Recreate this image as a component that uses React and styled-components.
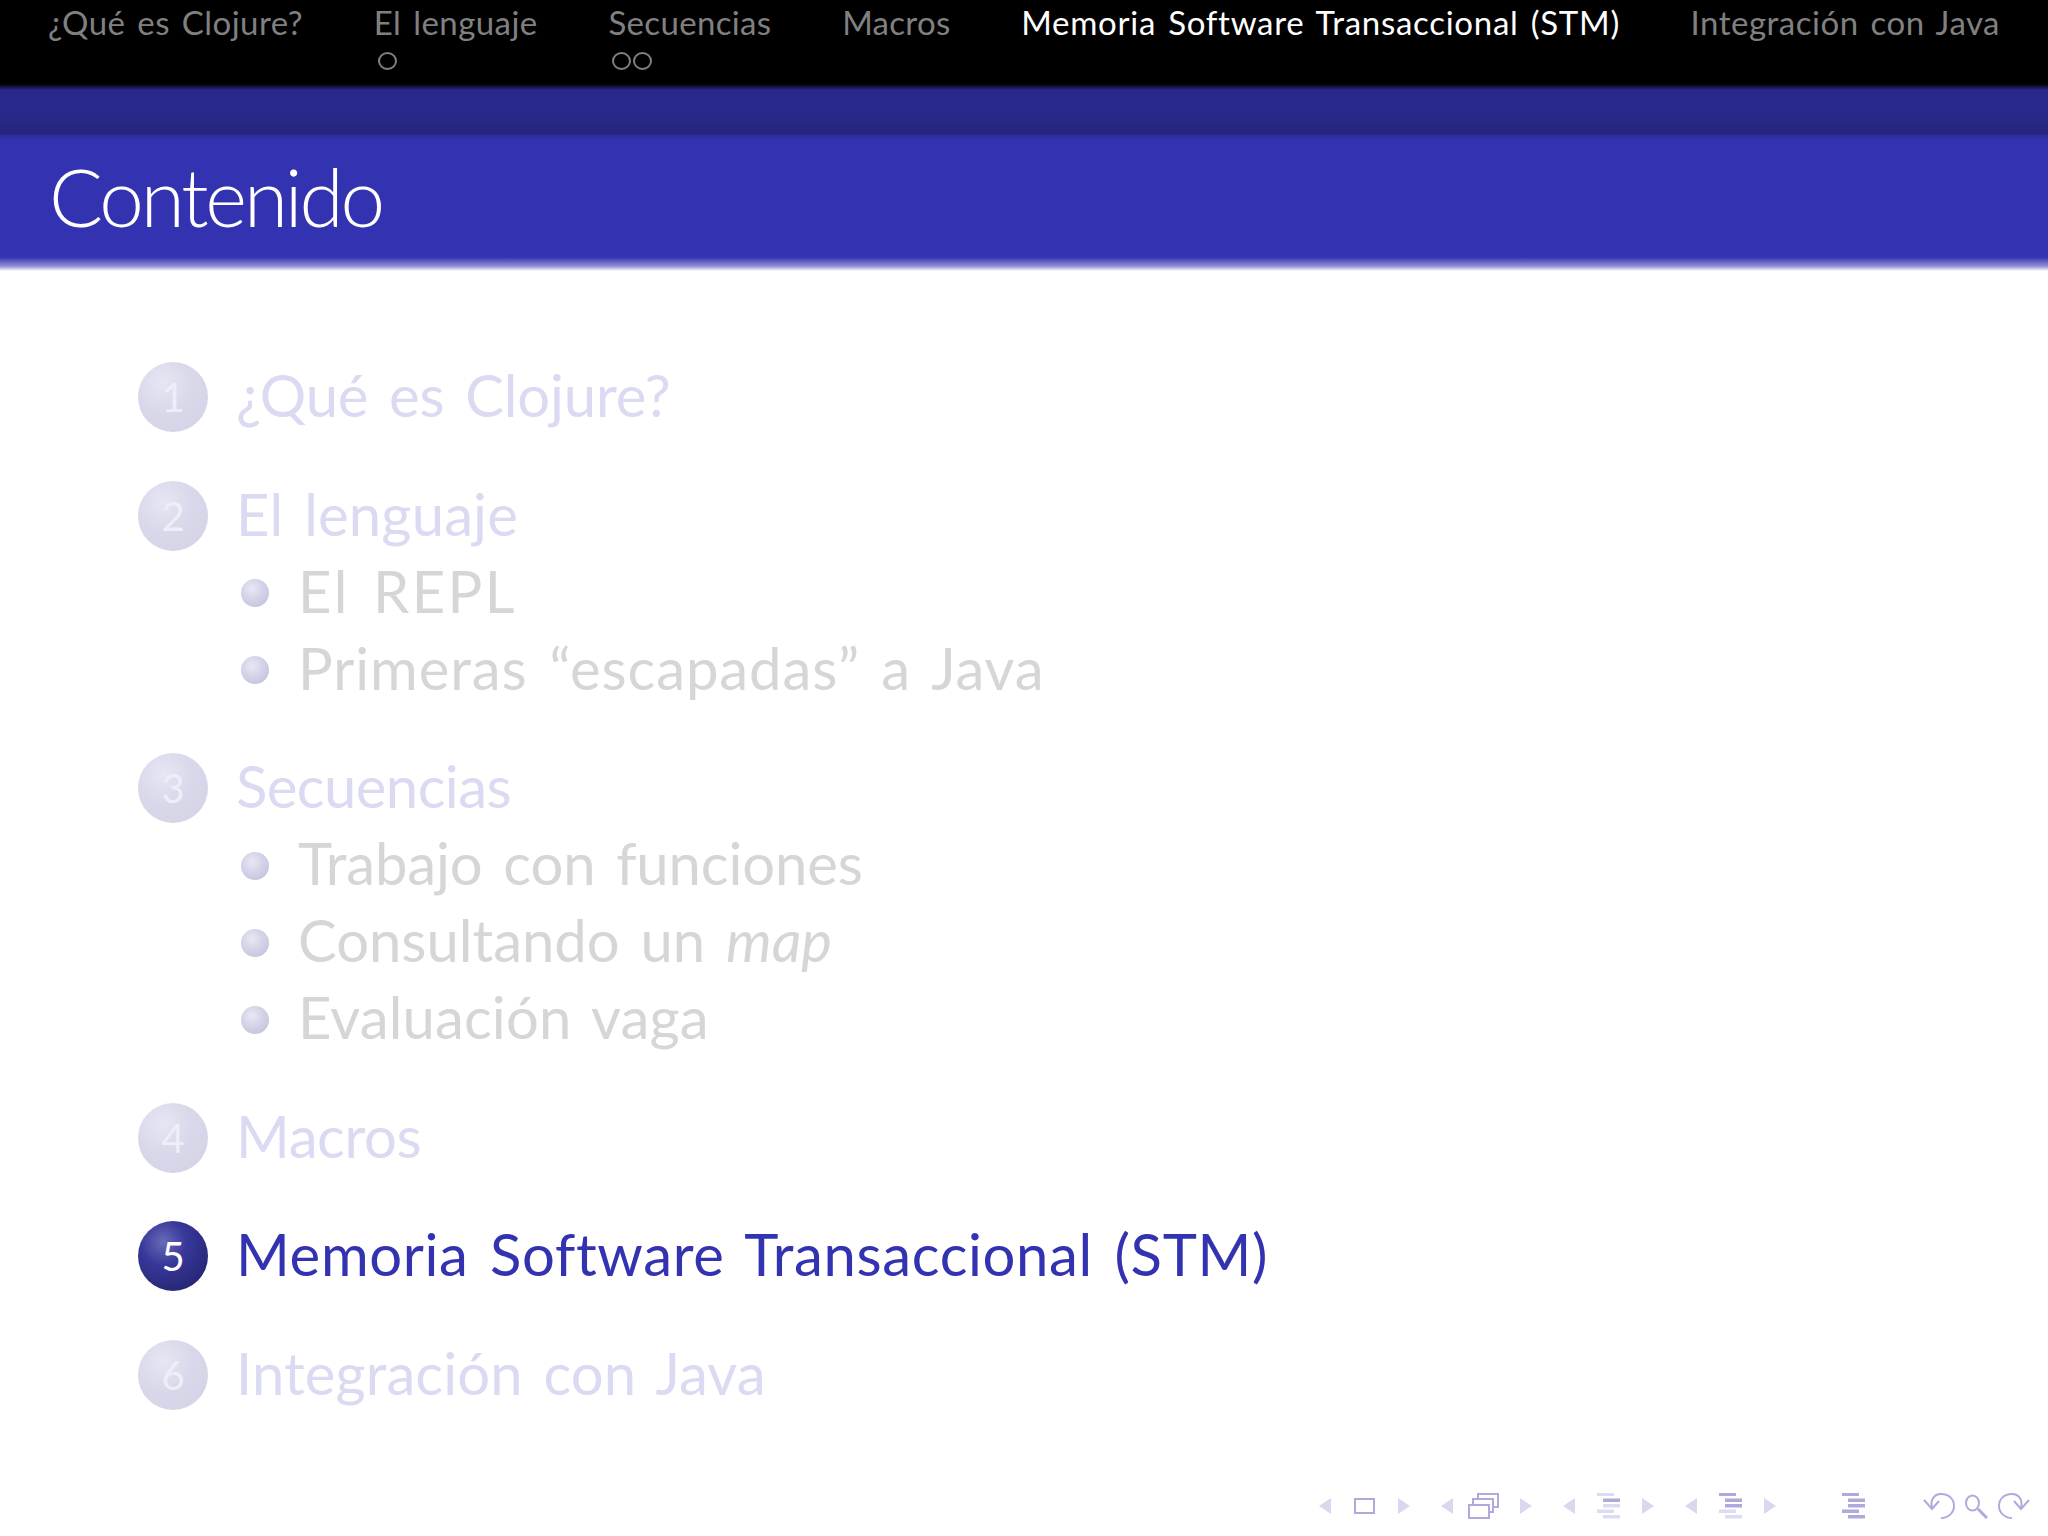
import React from 'react';
import styled, { createGlobalStyle } from 'styled-components';

const GlobalStyle = createGlobalStyle`
    html, body { margin: 0; padding: 0; background: #ffffff; }
    * { box-sizing: border-box; }
`;

const navItems = [
    { label: '¿Qué es Clojure?', dots: 0, track: 0.45 },
    { label: 'El lenguaje', dots: 1, track: 0.45 },
    { label: 'Secuencias', dots: 2, track: 0.35 },
    { label: 'Macros', dots: 0, track: 0.3 },
    { label: 'Memoria Software Transaccional (STM)', dots: 0, track: 0.72, active: true },
    { label: 'Integración con Java', dots: 0, track: 0.5 },
];

const sections = [
    { n: 1, title: '¿Qué es Clojure?', track: -0.15, subs: [] },
    {
        n: 2,
        title: 'El lenguaje',
        track: 0.15,
        subs: [
            { text: 'El REPL', track: 2.4 },
            { text: 'Primeras “escapadas” a Java', track: 0.93 },
        ],
    },
    {
        n: 3,
        title: 'Secuencias',
        track: -0.55,
        subs: [
            { text: 'Trabajo con funciones', track: -0.12 },
            { text: <>Consultando un <em>map</em></>, track: -0.02 },
            { text: 'Evaluación vaga', track: 0.15 },
        ],
    },
    { n: 4, title: 'Macros', track: -0.35, subs: [] },
    { n: 5, title: 'Memoria Software Transaccional (STM)', track: 0.65, subs: [], active: true },
    { n: 6, title: 'Integración con Java', track: 0.1, subs: [] },
];

const DARK = '#aeaadc';
const FADED = '#dcdcf0';

const TriLeft = () => (
    <svg width="12" height="16" viewBox="0 0 12 16"><path d="M12 0V16L0 8Z" fill="#d8d8ee" /></svg>
);
const TriRight = () => (
    <svg width="12" height="16" viewBox="0 0 12 16"><path d="M0 0V16L12 8Z" fill="#d8d8ee" /></svg>
);
const Slide = () => (
    <svg width="21" height="16" viewBox="0 0 21 16"><rect x="1" y="1" width="19" height="14" fill="none" stroke={DARK} strokeWidth="2" /></svg>
);
const Frames = () => (
    <svg width="37" height="26" viewBox="0 0 37 26">
        <rect x="10" y="1" width="20" height="13" fill="#fff" stroke={DARK} strokeWidth="2" />
        <rect x="5" y="6" width="20" height="13" fill="#fff" stroke={DARK} strokeWidth="2" />
        <rect x="1" y="12" width="20" height="13" fill="#fff" stroke={DARK} strokeWidth="2" />
    </svg>
);
// five short bars, some indented, each one dark or faded
const Bars = ({ shades }) => {
    const rows = [
        { x: 0, y: 0, h: 3 },
        { x: 6, y: 5.5, h: 3.5 },
        { x: 6, y: 11, h: 3.5 },
        { x: 0, y: 16.5, h: 3.5 },
        { x: 6, y: 22, h: 3.5 },
    ];
    return (
        <svg width="23" height="26" viewBox="0 0 23 26">
            {rows.map((r, i) => (
                <rect key={i} x={r.x} y={r.y} width="17" height={r.h} fill={shades[i] ? DARK : FADED} />
            ))}
        </svg>
    );
};
const Undo = () => (
    <svg width="32" height="26" viewBox="0 0 32 26" fill="none" stroke={DARK} strokeWidth="2">
        <path d="M9 15C7 7 11 1 18 1C26 1 31 6 31 13C31 20 25 25 18 25" />
        <path d="M1 7L9 16L16 8" />
    </svg>
);
const Search = () => (
    <svg width="23" height="26" viewBox="0 0 23 26" fill="none" stroke={DARK} strokeWidth="2">
        <ellipse cx="7.5" cy="10" rx="6.5" ry="7.5" />
        <path d="M13 16L22 25" strokeWidth="3" />
    </svg>
);
const Redo = () => (
    <svg width="32" height="26" viewBox="0 0 32 26" fill="none" stroke={DARK} strokeWidth="2">
        <path d="M23 15C25 7 21 1 14 1C6 1 1 6 1 13C1 20 7 25 14 25" />
        <path d="M31 7L23 16L16 8" />
    </svg>
);

const App = () => {
    return (
        <>
            <GlobalStyle />
            <Page>
                <NavBar>
                    {navItems.map((item) => (
                        <NavItem key={item.label}>
                            <NavLabel $active={item.active} $track={item.track}>{item.label}</NavLabel>
                            {item.dots > 0 && (
                                <Dots>
                                    {Array.from({ length: item.dots }).map((_, i) => <Dot key={i} />)}
                                </Dots>
                            )}
                        </NavItem>
                    ))}
                </NavBar>
                <Band />
                <TitleBar><Title>Contenido</Title></TitleBar>
                <TitleFade />
                <Toc>
                    {sections.map((s) => (
                        <Section key={s.n}>
                            <SectionRow>
                                <Ball $active={s.active}>{s.n}</Ball>
                                <SectionTitle $active={s.active} $track={s.track}>{s.title}</SectionTitle>
                            </SectionRow>
                            {s.subs.map((sub, i) => (
                                <SubRow key={i}>
                                    <Bullet />
                                    <SubTitle $track={sub.track}>{sub.text}</SubTitle>
                                </SubRow>
                            ))}
                        </Section>
                    ))}
                </Toc>
                <Footer>
                    <SymbolGroup $gap={23}><TriLeft /><Slide /><TriRight /></SymbolGroup>
                    <SymbolGroup $gap={15}><TriLeft /><Frames /><TriRight /></SymbolGroup>
                    <SymbolGroup $gap={22}><TriLeft /><Bars shades={[0, 1, 0, 0, 0]} /><TriRight /></SymbolGroup>
                    <SymbolGroup $gap={22}><TriLeft /><Bars shades={[1, 1, 1, 0, 0]} /><TriRight /></SymbolGroup>
                    <SymbolGroup $gap={0} $wide><Bars shades={[1, 1, 1, 1, 1]} /></SymbolGroup>
                    <SymbolGroup $gap={10}><Undo /><Search /><Redo /></SymbolGroup>
                </Footer>
            </Page>
        </>
    );
};

export default App;

const Page = styled.div`
    width: 2048px;
    height: 1536px;
    display: flex;
    flex-direction: column;
    overflow: hidden;
    background: #ffffff;
    font-family: "Lato", "Liberation Sans", sans-serif;
`;

const NavBar = styled.div`
    height: 84px;
    flex-shrink: 0;
    background: #000000;
    display: flex;
    justify-content: space-between;
    padding: 0 48px;
`;

const NavItem = styled.div`
    display: flex;
    flex-direction: column;
`;

const NavLabel = styled.span`
    font-size: 33px;
    line-height: 44px;
    letter-spacing: ${(p) => p.$track}px;
    word-spacing: 3px;
    white-space: nowrap;
    color: ${(p) => (p.$active ? '#ffffff' : '#808080')};
`;

const Dots = styled.div`
    display: flex;
    gap: 2px;
    margin: 8px 0 0 4px;
`;

const Dot = styled.span`
    width: 19px;
    height: 18px;
    border: 2px solid #808080;
    border-radius: 50%;
`;

const Band = styled.div`
    height: 51px;
    flex-shrink: 0;
    background: linear-gradient(#000000 0, #29298c 6px, #29298c 25px, #25257e 50px, #2a2a90 51px);
`;

const TitleBar = styled.div`
    height: 122px;
    flex-shrink: 0;
    background: linear-gradient(#2d2d9c 0, #3333b2 6px);
    padding-left: 49px;
`;

const Title = styled.h1`
    margin: 0;
    font-size: 80px;
    font-weight: 300;
    letter-spacing: -3.1px;
    line-height: 122px;
    color: #ffffff;
`;

const TitleFade = styled.div`
    height: 14px;
    flex-shrink: 0;
    background: linear-gradient(#3333b2 0, #8f8fd4 65%, #ffffff 100%);
`;

const Toc = styled.div`
    display: flex;
    flex-direction: column;
    gap: 42.5px;
    padding: 88px 0 0 138px;
`;

const Section = styled.div`
    display: flex;
    flex-direction: column;
`;

const SectionRow = styled.div`
    display: flex;
    align-items: center;
    gap: 28px;
    height: 76px;
`;

const Ball = styled.span`
    width: 70px;
    height: 70px;
    flex-shrink: 0;
    border-radius: 50%;
    display: flex;
    align-items: center;
    justify-content: center;
    font-size: 40px;
    color: ${(p) => (p.$active ? '#ffffff' : '#eeeef8')};
    background: ${(p) => (p.$active
        ? 'radial-gradient(circle at 36% 30%, #6a6ab8 0, #37379a 35%, #2a2a7c 70%, #1f1f5e 100%)'
        : 'radial-gradient(circle at 36% 30%, #e6e6f4 0, #d8d8ea 45%, #d2d2e4 100%)')};
`;

const SectionTitle = styled.span`
    font-size: 58px;
    line-height: 76px;
    padding-bottom: 4px;
    letter-spacing: ${(p) => p.$track}px;
    word-spacing: 6px;
    white-space: nowrap;
    color: ${(p) => (p.$active ? '#3333b2' : '#dadaf2')};
`;

const SubRow = styled.div`
    display: flex;
    align-items: center;
    height: 77px;
    padding-left: 103px;
    gap: 29px;
`;

const Bullet = styled.span`
    width: 28px;
    height: 28px;
    flex-shrink: 0;
    margin-top: 2px;
    border-radius: 50%;
    background: radial-gradient(circle at 40% 35%, #e8e8f4 0, #d0d0e6 50%, #bcbcd6 100%);
`;

const SubTitle = styled.span`
    font-size: 58px;
    line-height: 77px;
    padding-bottom: 4px;
    letter-spacing: ${(p) => p.$track}px;
    word-spacing: 6px;
    white-space: nowrap;
    color: #d6d6d6;
`;

const Footer = styled.div`
    margin-top: auto;
    display: flex;
    align-items: center;
    justify-content: flex-end;
    padding: 0 18px 17px 0;
    gap: 31px;
`;

const SymbolGroup = styled.div`
    display: flex;
    align-items: center;
    gap: ${(p) => p.$gap}px;
    margin-left: ${(p) => (p.$wide ? '35px' : '0')};
    margin-right: ${(p) => (p.$wide ? '27px' : '0')};
`;
